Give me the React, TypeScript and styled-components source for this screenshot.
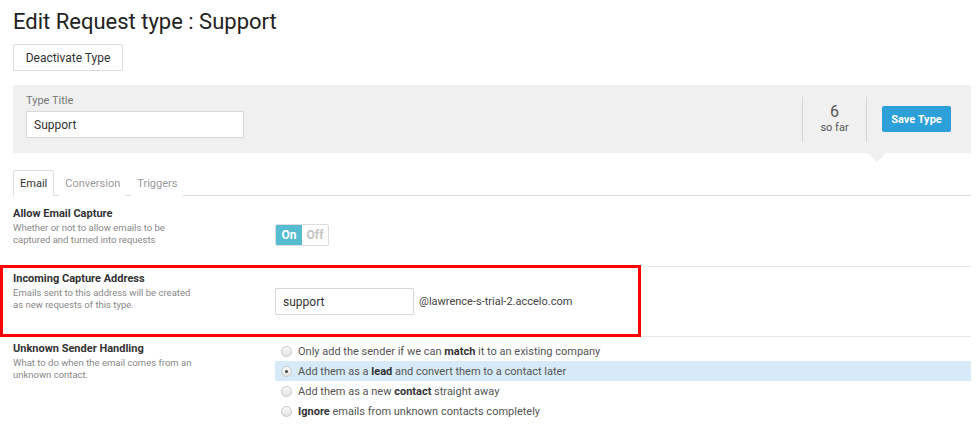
import React from 'react'
import styled, { createGlobalStyle } from 'styled-components'

const GlobalStyle = createGlobalStyle`
  body {
    margin: 0;
    background: #fff;
    font-family: Roboto, 'Liberation Sans', Arial, sans-serif;
    color: #333;
  }
`

const Page = styled.div`
  width: 958px;
  padding: 0 9px 0 13px;
`

const Title = styled.h1`
  margin: 0;
  padding-top: 8px;
  font-size: 22px;
  line-height: 28px;
  font-weight: 400;
  color: #222;
`

const GhostButton = styled.button`
  margin-top: 8px;
  height: 27px;
  width: 110px;
  padding: 0;
  font-family: inherit;
  font-size: 12px;
  color: #333;
  background: #fff;
  border: 1px solid #ddd;
  border-radius: 2px;
`

const Panel = styled.div`
  position: relative;
  margin-top: 14px;
  height: 68px;
  background: #f0f0f0;
  display: flex;
  align-items: center;
  padding: 0 20px 0 13px;

  &::after {
    content: '';
    position: absolute;
    left: 855px;
    bottom: -9px;
    border-left: 9px solid transparent;
    border-right: 9px solid transparent;
    border-top: 9px solid #f0f0f0;
  }
`

const TitleField = styled.div`
  flex: 1;
  align-self: flex-start;
  padding-top: 9px;
  display: flex;
  flex-direction: column;
`

const FieldLabel = styled.label`
  font-size: 11px;
  line-height: 14px;
  color: #777;
  margin-bottom: 3px;
`

const TextInput = styled.input<{ $width: number }>`
  box-sizing: border-box;
  width: ${({ $width }) => $width}px;
  height: 27px;
  padding: 0 7px;
  font-family: inherit;
  font-size: 12px;
  color: #333;
  background: #fff;
  border: 1px solid #d8d8d8;
  border-radius: 1px;
  outline: none;
`

const Stats = styled.div`
  width: 63px;
  height: 45px;
  border-left: 1px solid #d6d6d6;
  border-right: 1px solid #d6d6d6;
  display: flex;
  flex-direction: column;
  align-items: center;
  justify-content: center;
  margin-right: 15px;
`

const StatNumber = styled.span`
  font-size: 16px;
  line-height: 18px;
  color: #555;
`

const StatCaption = styled.span`
  font-size: 11px;
  line-height: 14px;
  color: #555;
`

const SaveButton = styled.button`
  width: 69px;
  height: 26px;
  padding: 0;
  font-family: inherit;
  font-size: 11px;
  font-weight: 700;
  color: #fff;
  background: #2d9fd9;
  border: none;
  border-radius: 2px;
`

const Tabs = styled.div`
  display: flex;
  margin-top: 17px;
  border-bottom: 1px solid #ddd;
  height: 25px;
`

const Tab = styled.div<{ $active?: boolean }>`
  box-sizing: border-box;
  height: 26px;
  padding: 0 ${({ $active }) => ($active ? '6px' : '5px')};
  margin-left: ${({ $active }) => ($active ? '0' : '5px')};
  font-size: 11px;
  line-height: 25px;
  color: ${({ $active }) => ($active ? '#333' : '#999')};
  background: #fff;
  border: 1px solid ${({ $active }) => ($active ? '#ddd' : 'transparent')};
  border-bottom-color: ${({ $active }) => ($active ? '#fff' : 'transparent')};
  border-radius: 3px 3px 0 0;
`

const SettingRow = styled.div<{ $top: number; $height: number; $last?: boolean }>`
  position: relative;
  display: flex;
  box-sizing: border-box;
  height: ${({ $height }) => $height}px;
  padding-top: ${({ $top }) => $top}px;
  border-bottom: 1px solid ${({ $last }) => ($last ? 'transparent' : '#e6e6e6')};
`

const SettingText = styled.div`
  width: 262px;
  flex-shrink: 0;
`

const SettingName = styled.div`
  font-size: 11px;
  line-height: 14px;
  font-weight: 700;
  color: #333;
`

const SettingHint = styled.div`
  margin-top: 1px;
  font-size: 9.5px;
  line-height: 11.5px;
  color: #888;
  width: 185px;
`

const Control = styled.div<{ $top: number }>`
  flex: 1;
  padding-top: ${({ $top }) => $top}px;
  display: flex;
  align-items: flex-start;
`

const Toggle = styled.div`
  display: flex;
  height: 20px;
  border-radius: 2px;
  overflow: hidden;
  border: 1px solid #ddd;
`

const ToggleOption = styled.span<{ $on?: boolean }>`
  display: flex;
  align-items: center;
  justify-content: center;
  width: 26px;
  font-size: 12px;
  font-weight: 700;
  color: ${({ $on }) => ($on ? '#fff' : '#c4c4c4')};
  background: ${({ $on }) => ($on ? '#56bccf' : '#fff')};
`

const Domain = styled.span`
  margin-left: 5px;
  font-size: 11px;
  line-height: 27px;
  color: #444;
`

const Highlight = styled.div`
  position: absolute;
  left: -13px;
  top: -2px;
  width: 641px;
  height: 72px;
  box-sizing: border-box;
  border: 3px solid #f00;
  pointer-events: none;
`

const Options = styled.div`
  flex: 1;
  display: flex;
  flex-direction: column;
  margin-top: -1px;
`

const Option = styled.label<{ $selected?: boolean }>`
  display: flex;
  align-items: center;
  height: 20px;
  padding-left: 6px;
  font-size: 11px;
  color: #555;
  background: ${({ $selected }) => ($selected ? '#d7eaf7' : 'transparent')};

  b {
    font-weight: 700;
    color: #333;
  }
`

const Radio = styled.span<{ $checked?: boolean }>`
  position: relative;
  box-sizing: border-box;
  width: 11px;
  height: 11px;
  margin-right: 6px;
  border-radius: 50%;
  border: 1px solid #c8c8c8;
  background: linear-gradient(#fafafa, #e2e2e2);

  &::after {
    content: '';
    display: ${({ $checked }) => ($checked ? 'block' : 'none')};
    position: absolute;
    left: 3px;
    top: 3px;
    width: 3px;
    height: 3px;
    border-radius: 50%;
    background: #444;
  }
`

const senderOptions = [
  { pre: 'Only add the sender if we can ', bold: 'match', post: ' it to an existing company' },
  { pre: 'Add them as a ', bold: 'lead', post: ' and convert them to a contact later', selected: true },
  { pre: 'Add them as a new ', bold: 'contact', post: ' straight away' },
  { pre: '', bold: 'Ignore', post: ' emails from unknown contacts completely' }
]

const App: React.FC = () => (
  <Page>
    <GlobalStyle />
    <Title>Edit Request type : Support</Title>
    <GhostButton>Deactivate Type</GhostButton>

    <Panel>
      <TitleField>
        <FieldLabel>Type Title</FieldLabel>
        <TextInput $width={218} defaultValue="Support" />
      </TitleField>
      <Stats>
        <StatNumber>6</StatNumber>
        <StatCaption>so far</StatCaption>
      </Stats>
      <SaveButton>Save Type</SaveButton>
    </Panel>

    <Tabs>
      <Tab $active>Email</Tab>
      <Tab>Conversion</Tab>
      <Tab>Triggers</Tab>
    </Tabs>

    <SettingRow $top={11} $height={71}>
      <SettingText>
        <SettingName>Allow Email Capture</SettingName>
        <SettingHint>
          Whether or not to allow emails to be captured and turned into requests
        </SettingHint>
      </SettingText>
      <Control $top={17}>
        <Toggle>
          <ToggleOption $on>On</ToggleOption>
          <ToggleOption>Off</ToggleOption>
        </Toggle>
      </Control>
    </SettingRow>

    <SettingRow $top={5} $height={70}>
      <Highlight />
      <SettingText>
        <SettingName>Incoming Capture Address</SettingName>
        <SettingHint>
          Emails sent to this address will be created as new requests of this type.
        </SettingHint>
      </SettingText>
      <Control $top={16}>
        <TextInput $width={139} defaultValue="support" />
        <Domain>@lawrence-s-trial-2.accelo.com</Domain>
      </Control>
    </SettingRow>

    <SettingRow $top={5} $height={90} $last>
      <SettingText>
        <SettingName>Unknown Sender Handling</SettingName>
        <SettingHint>What to do when the email comes from an unknown contact.</SettingHint>
      </SettingText>
      <Options>
        {senderOptions.map((o) => (
          <Option key={o.bold} $selected={o.selected}>
            <Radio $checked={o.selected} />
            <span>
              {o.pre}
              <b>{o.bold}</b>
              {o.post}
            </span>
          </Option>
        ))}
      </Options>
    </SettingRow>
  </Page>
)

export default App
